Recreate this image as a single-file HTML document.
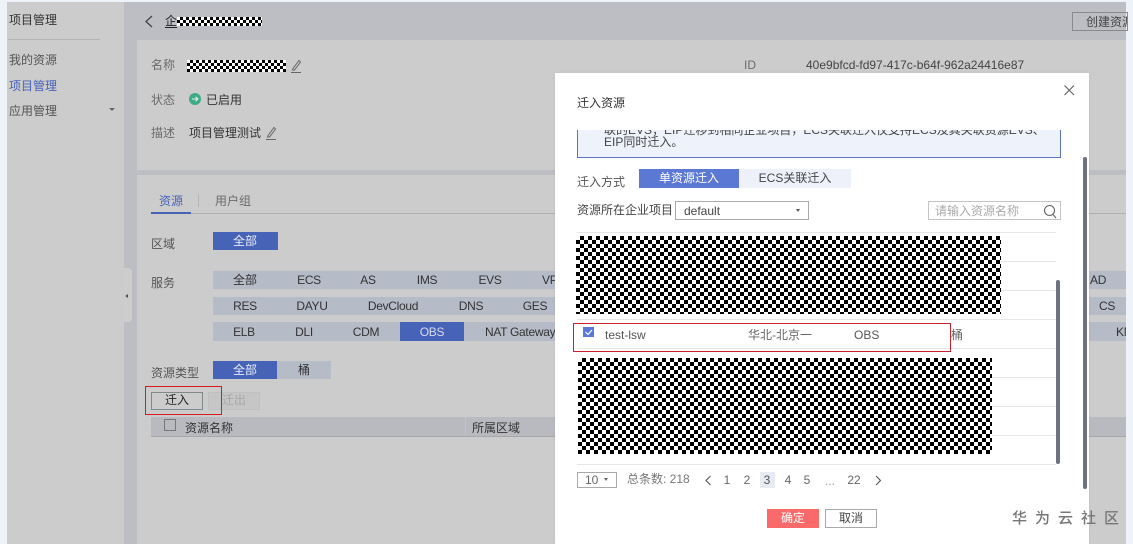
<!DOCTYPE html>
<html><head><meta charset="utf-8">
<style>
html,body{margin:0;padding:0}
body{width:1133px;height:544px;overflow:hidden;position:relative;background:#eef3f9;font:12px/14px "Liberation Sans","Noto Sans CJK SC",sans-serif;color:#333}
div,span.a{position:absolute;white-space:nowrap}
.t{transform:translateY(-50%)}
.c{transform:translate(-50%,-50%)}
.n{letter-spacing:-.3px}
.g{color:#6b6b6b}
.ch{background:repeating-conic-gradient(#000 0 25%,#fff 0 50%) 0 0/8px 8px}
.ch2{background:repeating-conic-gradient(#000 0 25%,#fff 0 50%) 0 0/6px 6px}
.ln{left:577px;width:479px;height:1px;background:#e6e6e6}
.tag{background:#b6bbc8;height:18px}
.sel{background:#4763b8}
svg{position:absolute;overflow:visible}
</style></head><body>
<!-- base -->
<div style="left:7px;top:2px;width:117px;height:542px;background:#cccccc"></div>
<div style="left:124px;top:2px;width:1002px;height:542px;background:#bdbec3"></div>
<div style="left:137px;top:40px;width:989px;height:130px;background:#cccccc"></div>
<div style="left:137px;top:175px;width:989px;height:369px;background:#cccccc"></div>
<div style="left:7px;top:0;width:1119px;height:2px;background:#eef3f9"></div>

<!-- sidebar -->
<div class="t" style="left:9px;top:20px;color:#333">项目管理</div>
<div style="left:8px;top:39px;width:92px;height:1px;background:#b5b5b5"></div>
<div class="t g" style="left:9px;top:60px;color:#555">我的资源</div>
<div class="t" style="left:9px;top:86px;color:#4763b8">项目管理</div>
<div class="t g" style="left:9px;top:111px;color:#555">应用管理</div>
<div style="left:109px;top:108px;border:3px solid transparent;border-top:3px solid #666"></div>
<div style="left:124px;top:268px;width:8px;height:54px;background:#cdcdcd;border-radius:0 4px 4px 0"></div>
<div style="left:125px;top:294px;border:2.5px solid transparent;border-right:3px solid #555;border-left:0"></div>

<!-- header -->
<svg style="left:0;top:0" width="1" height="1"><path d="M152 16L146 21.500L152 27" fill="none" stroke="#444" stroke-width="1.300"/></svg>
<div class="t" style="left:165px;top:21px;color:#222">企</div>
<div class="ch2" style="left:177px;top:17px;width:85px;height:9px;background-size:6px 6px"></div>
<div style="left:165px;top:27px;width:12px;height:1px;background:#222"></div>
<div style="left:1072px;top:12px;width:54px;height:17px;border:1px solid #8a8a8a;overflow:hidden"><span class="a" style="left:13px;top:2px;color:#444">创建资源</span></div>

<!-- card 1 -->
<div class="t g" style="left:151px;top:65px">名称</div>
<div class="ch2" style="left:187px;top:60px;width:99px;height:12px"></div>
<svg style="left:0;top:0" width="1" height="1" fill="none" stroke="#666"><path d="M293 68.500L299 60.500L300.500 62L294.500 70H292.500ZM291 72.500H301"/><path d="M268 135.500L274 127.500L275.500 129L269.500 137H267.500ZM266 139.500H276"/></svg>
<div class="t g" style="left:151px;top:100px">状态</div>
<div style="left:189px;top:93px;width:12px;height:12px;border-radius:50%;background:#3fab86"></div>
<svg style="left:0;top:0" width="1" height="1" fill="none" stroke="#e8f5ef"><path d="M192 99H198M195.500 96.800L198 99L195.500 101.200"/></svg>
<div class="t" style="left:206px;top:100px;color:#333">已启用</div>
<div class="t g" style="left:151px;top:133px">描述</div>
<div class="t" style="left:189px;top:133px;color:#333">项目管理测试</div>
<div class="t g" style="left:744px;top:65px">ID</div>
<div class="t" style="left:806px;top:65px;color:#444">40e9bfcd-fd97-417c-b64f-962a24416e87</div>

<!-- tabs -->
<div class="t" style="left:159px;top:201px;color:#4763b8">资源</div>
<div style="left:198px;top:194px;width:1px;height:13px;background:#b5b5b5"></div>
<div class="t g" style="left:215px;top:201px">用户组</div>
<div style="left:151px;top:213px;width:975px;height:1px;background:#b0b0b0"></div>
<div style="left:151px;top:212px;width:40px;height:2px;background:#4763b8"></div>

<div class="t" style="left:151px;top:244px;color:#555">区域</div>
<div class="sel" style="left:213px;top:232px;width:65px;height:18px"></div>
<div class="c" style="left:245px;top:241px;color:#e8ecf8">全部</div>

<div class="t" style="left:151px;top:283px;color:#555">服务</div>
<div class="tag" style="left:213px;top:271px;width:913px;"></div>
<div class="tag" style="left:213px;top:297px;width:913px;"></div>
<div class="tag" style="left:213px;top:322px;width:913px;height:19px"></div>
<div class="sel" style="left:400px;top:322px;width:64px;height:19px"></div>

<div class="c" style="left:245px;top:280px">全部</div>
<div class="c n" style="left:309px;top:280px">ECS</div>
<div class="c n" style="left:368px;top:280px">AS</div>
<div class="c n" style="left:427px;top:280px">IMS</div>
<div class="c n" style="left:490px;top:280px">EVS</div>
<div class="t n" style="left:542px;top:280px">VPC</div>
<div class="t n" style="left:1090px;top:280px">AD</div>

<div class="c n" style="left:245px;top:306px">RES</div>
<div class="c n" style="left:312px;top:306px">DAYU</div>
<div class="c n" style="left:393px;top:306px">DevCloud</div>
<div class="c n" style="left:471px;top:306px">DNS</div>
<div class="c n" style="left:535px;top:306px">GES</div>
<div class="c n" style="left:1107px;top:306px">CS</div>

<div class="c n" style="left:244px;top:332px">ELB</div>
<div class="c n" style="left:304px;top:332px">DLI</div>
<div class="c n" style="left:366px;top:332px">CDM</div>
<div class="c n" style="left:432px;top:332px;color:#d4dcf2">OBS</div>
<div class="t n" style="left:485px;top:332px">NAT Gateway</div>
<div class="n" style="left:1116px;top:325px;width:10px;height:14px;overflow:hidden">KMS</div>

<div class="t" style="left:151px;top:373px;color:#555">资源类型</div>
<div class="tag" style="left:277px;top:361px;width:54px"></div>
<div class="sel" style="left:213px;top:361px;width:64px;height:18px"></div>
<div class="c" style="left:245px;top:370px;color:#e8ecf8">全部</div>
<div class="c" style="left:304px;top:370px">桶</div>

<div style="left:151px;top:392px;width:50px;height:16px;border:1px solid #7e8a8a"></div>
<div class="c" style="left:177px;top:400px;color:#222">迁入</div>
<div style="left:208px;top:392px;width:50px;height:16px;border:1px solid #c0c0c0;background:#c6c6c6"></div>
<div class="c" style="left:234px;top:400px;color:#a8a8a8">迁出</div>
<div style="left:145px;top:386px;width:75px;height:27px;border:1px solid #d8191f"></div>

<div style="left:151px;top:417px;width:975px;height:19px;background:#b9bac0;border-bottom:1px solid #a8a8a8"></div>
<div style="left:164px;top:419px;width:10px;height:10px;border:1px solid #777"></div>
<div class="t" style="left:185px;top:428px;color:#333">资源名称</div>
<div style="left:465px;top:417px;width:1px;height:19px;background:#c2c3c8"></div>
<div class="t" style="left:472px;top:428px;color:#333">所属区域</div>

<!-- dialog -->
<div style="left:555px;top:73px;width:534px;height:471px;background:#fff;box-shadow:0 0 3px rgba(0,0,0,.08)"></div>
<div class="t" style="left:577px;top:103px;color:#333">迁入资源</div>
<svg style="left:0;top:0" width="1" height="1"><path d="M1064.500 85.500L1074 95M1074 85.500L1064.500 95" stroke="#666" stroke-width="1.200"/></svg>

<div style="left:577px;top:130px;width:482px;height:27px;background:#eef2fb;border:1px solid #5a73c4;border-top:0;overflow:hidden">
<span class="a" style="left:26px;top:-6px;color:#444;line-height:12px">联的EVS；EIP迁移到相同企业项目，ECS关联迁入仅支持ECS及其关联资源EVS、</span>
<span class="a" style="left:26px;top:6px;color:#444;line-height:12px">EIP同时迁入。</span></div>

<div class="t" style="left:577px;top:182px;color:#555">迁入方式</div>
<div style="left:639px;top:169px;width:100px;height:19px;background:#5b78d5"></div>
<div style="left:739px;top:169px;width:112px;height:19px;background:#eef1fa"></div>
<div class="c" style="left:689px;top:178px;color:#fff">单资源迁入</div>
<div class="c" style="left:795px;top:178px;color:#444">ECS关联迁入</div>

<div class="t" style="left:577px;top:210px;color:#444">资源所在企业项目</div>
<div style="left:675px;top:201px;width:132px;height:17px;border:1px solid #aaa"></div>
<div class="t" style="left:684px;top:211px;color:#444">default</div>
<div style="left:796px;top:209px;border:2.500px solid transparent;border-top:3px solid #555"></div>
<div style="left:928px;top:201px;width:131px;height:17px;border:1px solid #c4c4c4"></div>
<div class="t" style="left:935px;top:211px;color:#aaa">请输入资源名称</div>
<svg style="left:0;top:0" width="1" height="1" fill="none" stroke="#666" stroke-width="1.100"><circle cx="1049.500" cy="210.500" r="5"/><path d="M1053 214.500L1056 218"/></svg>

<div class="ln" style="top:232px"></div>
<div class="ln" style="top:261px"></div>
<div class="ln" style="top:290px"></div>
<div class="ln" style="top:319px"></div>
<div class="ln" style="top:348px"></div>
<div class="ln" style="top:377px"></div>
<div class="ln" style="top:406px"></div>
<div class="ln" style="top:435px"></div>
<div class="ln" style="top:464px"></div>

<div class="ch" style="left:576px;top:236px;width:425px;height:78px"></div>
<div class="ch" style="left:578px;top:358px;width:414px;height:96px"></div>

<div style="left:583px;top:327px;width:11px;height:10px;background:#5b78d5"></div>
<svg style="left:0;top:0" width="1" height="1"><path d="M585.500 332L588 334.500L592 330" fill="none" stroke="#fff" stroke-width="1.200"/></svg>
<div class="t" style="left:605px;top:335px;color:#555">test-lsw</div>
<div class="t" style="left:748px;top:335px;color:#666">华北-北京一</div>
<div class="t" style="left:854px;top:335px;color:#555">OBS</div>
<div class="t" style="left:951px;top:335px;color:#666">桶</div>
<div style="left:573px;top:323px;width:376px;height:27px;border:1px solid #c8202c"></div>

<div style="left:1056px;top:280px;width:4px;height:184px;background:#70717f;border-radius:2px"></div>
<div style="left:1083px;top:157px;width:4px;height:332px;background:#70717f;border-radius:2px"></div>

<!-- pagination -->
<div style="left:577px;top:472px;width:38px;height:14px;border:1px solid #aaa"></div>
<div class="t" style="left:585px;top:480px;color:#666">10</div>
<div style="left:604px;top:478px;border:2.500px solid transparent;border-top:3px solid #666"></div>
<div class="t" style="left:627px;top:479px;color:#777">总条数: 218</div>
<svg style="left:0;top:0" width="1" height="1" fill="none" stroke="#555" stroke-width="1.100"><path d="M710.500 476L706 480.500L710.500 485M876 476L880.500 480.500L876 485"/></svg>
<div style="left:760px;top:472px;width:15px;height:16px;background:#e8eaf6"></div>
<div class="c" style="left:727px;top:480px;color:#666">1</div>
<div class="c" style="left:747px;top:480px;color:#666">2</div>
<div class="c" style="left:767px;top:480px;color:#555">3</div>
<div class="c" style="left:788px;top:480px;color:#666">4</div>
<div class="c" style="left:807px;top:480px;color:#666">5</div>
<div class="c" style="left:830px;top:481px;color:#999">...</div>
<div class="c" style="left:854px;top:480px;color:#666">22</div>

<div style="left:767px;top:509px;width:52px;height:19px;background:#fa6a6a"></div>
<div class="c" style="left:793px;top:518px;color:#fff">确定</div>
<div style="left:825px;top:509px;width:50px;height:17px;border:1px solid #aaa"></div>
<div class="c" style="left:851px;top:518px;color:#444">取消</div>

<div class="t" style="left:1012px;top:519px;font-size:15px;line-height:18px;letter-spacing:8px;color:#777;font-weight:500">华为云社区</div>
</body></html>
